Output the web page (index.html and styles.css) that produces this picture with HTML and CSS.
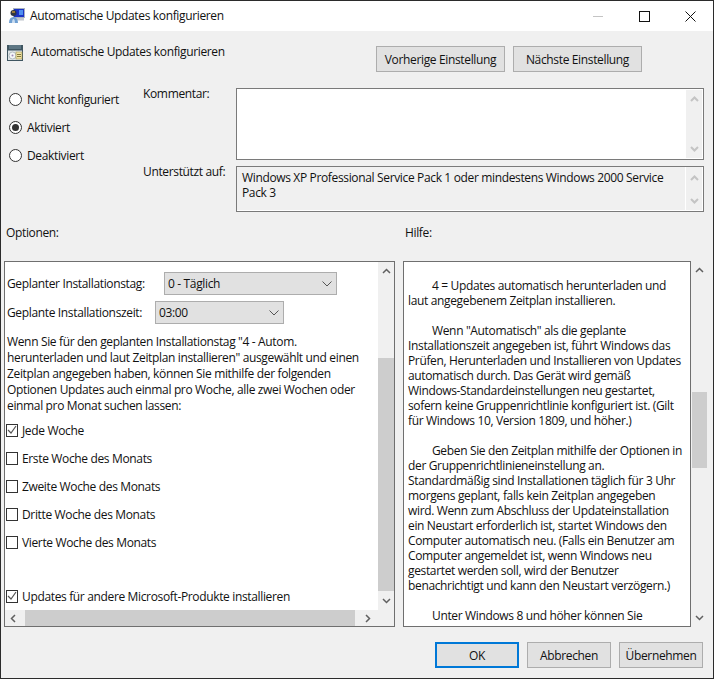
FILE: index.html
```html
<!DOCTYPE html>
<html lang="de">
<head>
  <meta charset="UTF-8">
  <title>Automatische Updates konfigurieren</title>
  <link rel="stylesheet" href="styles.css">
</head>
<body>

  <div class="window">
    <div class="titlebar">
      <svg class="title-icon" width="16" height="16" viewBox="0 0 16 16">
        <rect x="4" y="0" width="12" height="10" fill="#a9b2bf"/>
        <rect x="5" y="1" width="10" height="8" fill="#1a33c4"/>
        <rect x="10" y="2" width="4" height="5" fill="#4f8ff0"/>
        <rect x="8" y="10" width="7" height="2" fill="#c3c8cf"/>
        <rect x="9" y="12" width="6" height="1" fill="#dfe2e6"/>
        <circle cx="4.500" cy="5" r="3" fill="#2f3744"/>
        <path d="M3 3h3v2H3z" fill="#9a7a3a"/>
        <path d="M0 15c0-4 1.500-6 4.500-6s4.500 2 4.500 6z" fill="#6f9fd2"/>
        <path d="M3 15c0-2 .5-4 1.500-4s1.500 2 1.500 4z" fill="#c9dcf0"/>
      </svg>
      <span class="title-text">Automatische Updates konfigurieren</span>
      <div class="window-buttons">
        <div class="win-btn"><span class="win-min"></span></div>
        <div class="win-btn"><span class="win-max"></span></div>
        <div class="win-btn">
          <svg width="11" height="11" viewBox="0 0 11 11"><path d="M.5.500l10 10M10.500.500l-10 10" stroke="#111" fill="none"/></svg>
        </div>
      </div>
    </div>

    <div class="content">
      <div class="head">
        <svg class="head-icon" width="16" height="16" viewBox="0 0 16 16">
          <rect x="0" y="0" width="16" height="16" fill="#3f5560"/>
          <path d="M2 1h12M2 3h12" stroke="#7d98a6"/>
          <rect x="1" y="5" width="14" height="10" fill="#dfe4e6"/>
          <rect x="1" y="5" width="14" height="1" fill="#8b9aa3"/>
          <circle cx="5.500" cy="10.500" r="3.500" fill="#f4f6f7" stroke="#9aa7af" stroke-width=".7"/>
          <circle cx="5.500" cy="10.500" r="1" fill="#9a86b8"/>
          <rect x="9" y="7" width="6" height="7" fill="#efe3a6" stroke="#a3954f" stroke-width=".6"/>
          <path d="M10 9.500h4M10 11.500h4" stroke="#857a3d"/>
        </svg>
        <span class="head-title">Automatische Updates konfigurieren</span>
        <div class="head-buttons">
          <button class="btn btn-nav">Vorherige Einstellung</button>
          <button class="btn btn-nav">Nächste Einstellung</button>
        </div>
      </div>

      <div class="settings">
        <div class="radios">
          <div class="radio-row"><span class="radio"></span>Nicht konfiguriert</div>
          <div class="radio-row"><span class="radio radio-on"></span>Aktiviert</div>
          <div class="radio-row"><span class="radio"></span>Deaktiviert</div>
        </div>
        <div class="field-label">Kommentar:</div>
        <div class="box box-comment">
          <div class="box-text"></div>
          <div class="scroll-v scroll-off">
            <svg class="chev" width="9" height="6" viewBox="0 0 9 6"><path d="M1 5l3.500-3.500L8 5" /></svg>
            <svg class="chev" width="9" height="6" viewBox="0 0 9 6"><path d="M1 1l3.500 3.500L8 1" /></svg>
          </div>
        </div>
        <div class="field-label">Unterstützt auf:</div>
        <div class="box box-support">
          <div class="box-text">Windows XP Professional Service Pack 1 oder mindestens Windows 2000 Service<br>Pack 3</div>
          <div class="scroll-v scroll-off">
            <svg class="chev" width="9" height="6" viewBox="0 0 9 6"><path d="M1 5l3.500-3.500L8 5" /></svg>
            <svg class="chev" width="9" height="6" viewBox="0 0 9 6"><path d="M1 1l3.500 3.500L8 1" /></svg>
          </div>
        </div>
      </div>

      <div class="section-labels">
        <div class="label-options">Optionen:</div>
        <div class="label-help">Hilfe:</div>
      </div>

      <div class="panels">
        <div class="panel panel-options">
          <div class="options-body">
            <div class="combo-row">
              <span class="combo-label label-day">Geplanter Installationstag:</span>
              <div class="combo combo-day">0 - Täglich
                <svg class="combo-chev" width="10" height="6" viewBox="0 0 10 6"><path d="M.5.500L5 5 9.500.500"/></svg>
              </div>
            </div>
            <div class="combo-row combo-row-second">
              <span class="combo-label label-time">Geplante Installationszeit:</span>
              <div class="combo combo-time">03:00
                <svg class="combo-chev" width="10" height="6" viewBox="0 0 10 6"><path d="M.5.500L5 5 9.500.500"/></svg>
              </div>
            </div>
            <p class="options-text">Wenn Sie für den geplanten Installationstag "4 - Autom.<br>herunterladen und laut Zeitplan installieren" ausgewählt und einen<br>Zeitplan angegeben haben, können Sie mithilfe der folgenden<br>Optionen Updates auch einmal pro Woche, alle zwei Wochen oder<br>einmal pro Monat suchen lassen:</p>
            <div class="check-list">
              <div class="check-row"><span class="check"><svg width="10" height="10" viewBox="0 0 10 10"><path d="M1 5l3 3 5-7"/></svg></span>Jede Woche</div>
              <div class="check-row"><span class="check"></span>Erste Woche des Monats</div>
              <div class="check-row"><span class="check"></span>Zweite Woche des Monats</div>
              <div class="check-row"><span class="check"></span>Dritte Woche des Monats</div>
              <div class="check-row"><span class="check"></span>Vierte Woche des Monats</div>
              <div class="check-row check-row-last"><span class="check"><svg width="10" height="10" viewBox="0 0 10 10"><path d="M1 5l3 3 5-7"/></svg></span>Updates für andere Microsoft-Produkte installieren</div>
            </div>
          </div>
          <div class="scroll-v scroll-options">
            <svg class="chev" width="9" height="6" viewBox="0 0 9 6"><path d="M1 5l3.500-3.500L8 5" /></svg>
            <div class="thumb-v thumb-options"></div>
            <svg class="chev chev-down" width="9" height="6" viewBox="0 0 9 6"><path d="M1 1l3.500 3.500L8 1" /></svg>
          </div>
          <div class="scroll-h">
            <svg class="chev" width="6" height="9" viewBox="0 0 6 9"><path d="M5 1L1.500 4.500 5 8"/></svg>
            <div class="thumb-h"></div>
            <svg class="chev" width="6" height="9" viewBox="0 0 6 9"><path d="M1 1l3.500 3.500L1 8"/></svg>
          </div>
          <div class="scroll-corner"></div>
        </div>

        <div class="panel-help-wrap">
          <div class="panel panel-help">
            <p>4 = Updates automatisch herunterladen und<br>laut angegebenem Zeitplan installieren.</p>
            <p>Wenn "Automatisch" als die geplante<br>Installationszeit angegeben ist, führt Windows das<br>Prüfen, Herunterladen und Installieren von Updates<br>automatisch durch. Das Gerät wird gemäß<br>Windows-Standardeinstellungen neu gestartet,<br>sofern keine Gruppenrichtlinie konfiguriert ist. (Gilt<br>für Windows 10, Version 1809, und höher.)</p>
            <p>Geben Sie den Zeitplan mithilfe der Optionen in<br>der Gruppenrichtlinieneinstellung an.<br>Standardmäßig sind Installationen täglich für 3 Uhr<br>morgens geplant, falls kein Zeitplan angegeben<br>wird. Wenn zum Abschluss der Updateinstallation<br>ein Neustart erforderlich ist, startet Windows den<br>Computer automatisch neu. (Falls ein Benutzer am<br>Computer angemeldet ist, wenn Windows neu<br>gestartet werden soll, wird der Benutzer<br>benachrichtigt und kann den Neustart verzögern.)</p>
            <p>Unter Windows 8 und höher können Sie</p>
          </div>
          <div class="scroll-v scroll-help">
            <svg class="chev" width="9" height="6" viewBox="0 0 9 6"><path d="M1 5l3.500-3.500L8 5" /></svg>
            <div class="thumb-v thumb-help"></div>
            <svg class="chev chev-down" width="9" height="6" viewBox="0 0 9 6"><path d="M1 1l3.500 3.500L8 1" /></svg>
          </div>
        </div>
      </div>

      <div class="footer">
        <button class="btn btn-foot btn-default">OK</button>
        <button class="btn btn-foot">Abbrechen</button>
        <button class="btn btn-foot">Übernehmen</button>
      </div>
    </div>
  </div>

</body>
</html>
```

FILE: styles.css
```css
* {
  margin: 0;
  padding: 0;
  box-sizing: border-box;
}

body {
  font-family: 'Open Sans', 'Noto Sans', sans-serif;
  font-size: 12px;
  letter-spacing: -0.35px;
  color: #111;
  background: #f0f0f0;
}

.window {
  width: 714px;
  height: 679px;
  border: 1px solid #2b2b2b;
  display: flex;
  flex-direction: column;
  overflow: hidden;
}

.titlebar {
  height: 30px;
  background: #fff;
  display: flex;
  align-items: center;
  padding-left: 8px;
  flex-shrink: 0;
}

.title-text {
  margin: -2px 0 0 5px;
}

.window-buttons {
  margin-left: auto;
  display: flex;
}

.win-btn {
  width: 46px;
  height: 30px;
  display: flex;
  align-items: center;
  justify-content: center;
}

.win-min {
  width: 10px;
  height: 1px;
  background: #c4c4c4;
}

.win-max {
  width: 11px;
  height: 11px;
  border: 1px solid #111;
}

.content {
  flex: 1;
  background: #f0f0f0;
  display: flex;
  flex-direction: column;
}

.head {
  display: flex;
  align-items: flex-start;
  padding: 15px 71px 0 6px;
}

.head-icon {
  margin-top: -1px;
}

.head-title {
  margin: -2px 0 0 8px;
  line-height: 16px;
}

.head-buttons {
  margin-left: auto;
  display: flex;
  gap: 8px;
}

.btn {
  font: inherit;
  letter-spacing: inherit;
  color: #111;
  background: #e1e1e1;
  border: 1px solid #adadad;
  height: 26px;
}

.btn-nav {
  width: 129px;
}

.settings {
  display: grid;
  grid-template-columns: 135px 93px 468px;
  grid-template-rows: 72px 46px;
  row-gap: 6px;
  margin: 16px 0 0 7px;
}

.radios {
  grid-row: 1 / 3;
  display: flex;
  flex-direction: column;
  margin: -3px 0 0 1px;
}

.radio-row {
  height: 28px;
  display: flex;
  align-items: center;
  gap: 5px;
}

.radio {
  width: 13px;
  height: 13px;
  border: 1px solid #333;
  border-radius: 50%;
  background: #fff;
  display: flex;
  align-items: center;
  justify-content: center;
  flex-shrink: 0;
}

.radio-on::after {
  content: '';
  width: 7px;
  height: 7px;
  border-radius: 50%;
  background: #333;
}

.field-label {
  line-height: 16px;
  margin-top: -2px;
}

.box {
  border: 1px solid #7a7a7a;
  display: flex;
  justify-content: space-between;
  background: #fff;
  padding: 1px;
}

.box-text {
  flex: 1;
  padding: 2px 4px;
  line-height: 15px;
}

.box-support {
  background: #f0f0f0;
  padding: 0 1px 1px 0;
  box-shadow: inset -1px -1px 0 #fff;
}

.box-support .box-text {
  padding-top: 3px;
  padding-left: 5px;
}

.box-support .scroll-v {
  border-left: 1px solid #fff;
  width: 17px;
  padding: 8px 0 6px;
}

.scroll-v {
  width: 16px;
  flex-shrink: 0;
  background: #f0f0f0;
  display: flex;
  flex-direction: column;
  align-items: center;
  justify-content: space-between;
  padding: 6px 0;
}

.chev {
  fill: none;
  stroke: #606060;
  stroke-width: 1.5;
  flex-shrink: 0;
}

.scroll-off .chev {
  stroke: #c4c4c4;
  stroke-width: 2;
}

.section-labels {
  display: flex;
  margin-top: 13px;
  padding-left: 5px;
  line-height: 16px;
}

.label-options {
  width: 399px;
}

.panels {
  display: flex;
  margin: 20px 0 0 3px;
  height: 366px;
}

.panel {
  border: 1px solid #6f6f6f;
  background: #fff;
}

.panel-options {
  width: 391px;
  display: grid;
  grid-template-columns: 1fr 16px;
  grid-template-rows: 1fr 16px;
}

.options-body {
  overflow: hidden;
  padding-left: 2px;
}

.combo-row {
  display: flex;
  margin-top: 10px;
  align-items: center;
}

.combo-row-second {
  margin-top: 6px;
}

.label-day {
  width: 157px;
}

.label-time {
  width: 148px;
}

.combo {
  height: 23px;
  background: #e1e1e1;
  border: 1px solid #adadad;
  line-height: 21px;
  padding-left: 3px;
  position: relative;
}

.combo-day {
  width: 173px;
}

.combo-time {
  width: 129px;
}

.combo-chev {
  position: absolute;
  right: 4px;
  top: 8px;
  fill: none;
  stroke: #555;
}

.options-text {
  margin-top: 10px;
  line-height: 16px;
  white-space: nowrap;
}

.check-list {
  margin-top: 2px;
}

.check-row {
  height: 28px;
  display: flex;
  align-items: center;
  gap: 4px;
}

.check-row-last {
  margin-top: 26px;
}

.check {
  width: 12px;
  height: 13px;
  border: 1px solid #333;
  background: #fff;
  flex-shrink: 0;
  margin-left: -1px;
}

.check svg {
  display: block;
  fill: none;
  stroke: #555;
  stroke-width: 1.2;
}

.scroll-options {
  justify-content: flex-start;
}

.thumb-v {
  width: 16px;
  background: #cdcdcd;
}

.thumb-options {
  height: 233px;
  margin-top: 84px;
}

.chev-down {
  margin-top: 7px;
}

.scroll-h {
  background: #f0f0f0;
  display: flex;
  align-items: center;
  padding-left: 5px;
}

.thumb-h {
  width: 330px;
  height: 16px;
  margin: 0 10px 0 9px;
  background: #cdcdcd;
}

.scroll-corner {
  background: #f0f0f0;
}

.panel-help-wrap {
  display: flex;
  margin-left: 8px;
}

.panel-help {
  width: 288px;
  padding: 1px 0 0 4px;
  overflow: hidden;
  white-space: nowrap;
  line-height: 15px;
}

.panel-help p {
  margin-top: 15px;
  text-indent: 24px;
}

.scroll-help {
  margin-left: 1px;
  align-items: flex-start;
  justify-content: flex-start;
}

.scroll-help .chev {
  margin-left: 3px;
}

.thumb-help {
  width: 15px;
  height: 76px;
  margin-top: 119px;
}

.scroll-help .chev-down {
  margin-top: 147px;
}

.footer {
  display: flex;
  justify-content: flex-end;
  gap: 8px;
  padding: 15px 10px 0 0;
}

.btn-foot {
  width: 84px;
}

.btn-default {
  border: 2px solid #0078d7;
}
```
